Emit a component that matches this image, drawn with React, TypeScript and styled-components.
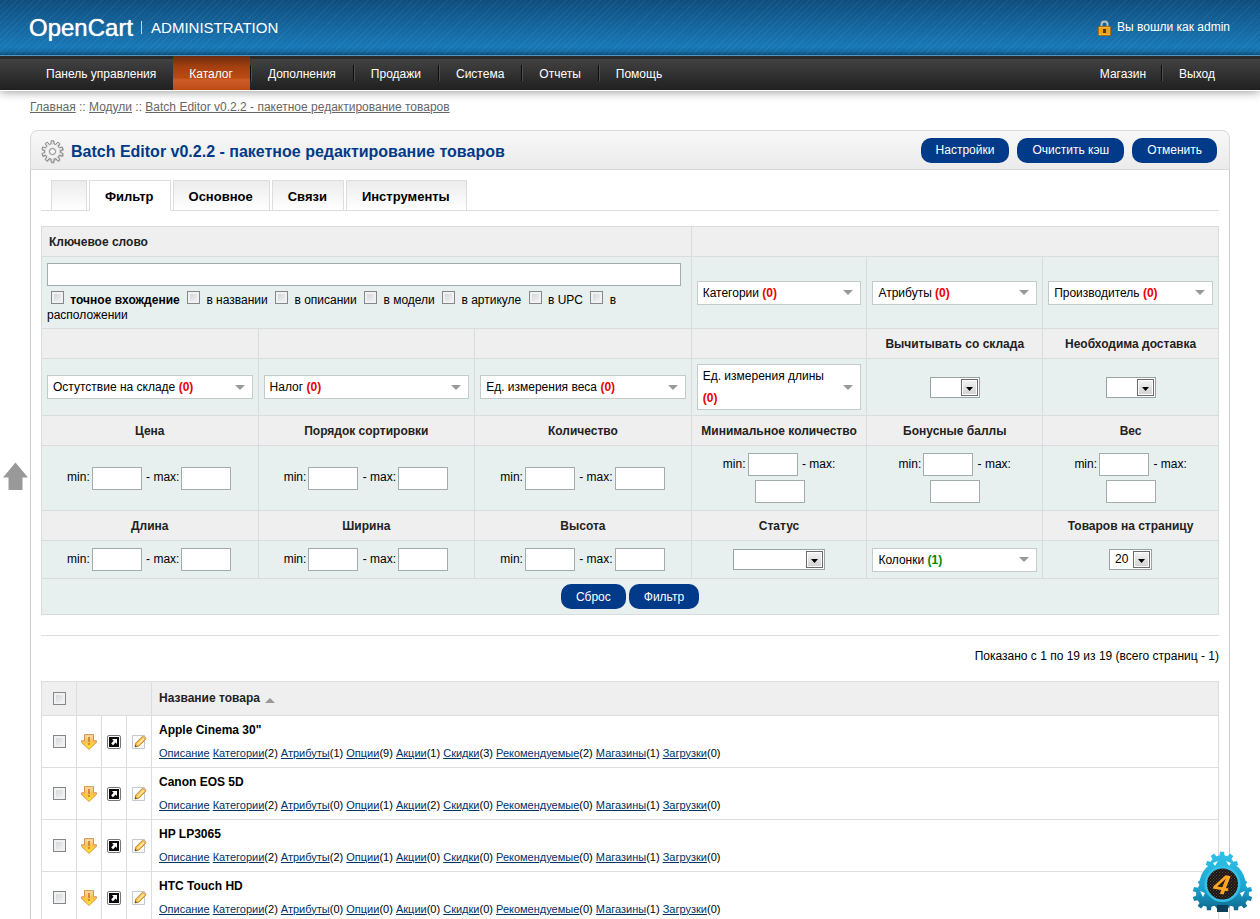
import React from 'react';
import styled, { createGlobalStyle } from 'styled-components';

const GlobalStyle = createGlobalStyle`
  *, *::before, *::after { box-sizing: border-box; }
  body {
    margin: 0;
    background: #fff;
    color: #000;
    font: 12px/15px "Liberation Sans", Arial, sans-serif;
  }
  button, input, select { font: inherit; color: inherit; }
`;

/* ---------- page header ---------- */

const Header = styled.header`
  display: flex;
  justify-content: space-between;
  align-items: center;
  height: 55px;
  padding: 0 30px 0 29px;
  color: #fff;
  background:
    repeating-linear-gradient(135deg, rgba(255, 255, 255, 0.05) 0 1px, transparent 1px 4px),
    linear-gradient(#0f4d7d, #1878b7 85%, #1670ab 94%, #0f5585);
`;

const Logo = styled.a`
  display: flex;
  align-items: center;
  color: #fff;
  text-decoration: none;
`;

const LogoName = styled.span`
  font-size: 24px;
  line-height: 28px;
  text-shadow: 0 0 1px #fff;
`;

const LogoSection = styled.span`
  margin-left: 8px;
  padding-left: 9px;
  border-left: 1px solid #b9d6ea;
  font-size: 15px;
  line-height: 13px;
`;

const Account = styled.div`
  display: flex;
  align-items: center;
  gap: 6px;
`;

const Nav = styled.nav`
  display: flex;
  justify-content: space-between;
  height: 35px;
  padding: 0 30px;
  border-top: 1px solid #4f97c7;
  background: linear-gradient(#2a2a2a 0 3px, #424242 3px, #202020);
  box-shadow: 0 1px 0 #fff, 0 2px 9px rgba(0, 0, 0, 0.4);
`;

const MenuLink = styled.a`
  padding: 2px 15px 0 16px;
  color: #fff;
  text-decoration: none;
`;

const Menu = styled.ul<{ $roomy?: boolean }>`
  display: flex;
  align-items: center;
  margin: 0;
  padding: 0;
  list-style: none;
  ${MenuLink} { padding-right: ${(p) => (p.$roomy ? 17 : 15)}px; }
`;

const MenuItem = styled.li<{ $active?: boolean; $divided?: boolean }>`
  display: flex;
  align-items: center;
  height: 100%;
  background: ${(p) => (p.$active ? 'linear-gradient(#6b2c10, #a23f10 30%, #bb4a14 65%, #cd5c25 70%, #bd4b18)' : 'none')};
  &::before {
    content: '';
    display: ${(p) => (p.$divided ? 'block' : 'none')};
    width: 2px;
    height: 16px;
    background: linear-gradient(90deg, #0c0c0c 50%, #505050 50%);
  }
`;

/* ---------- content box ---------- */

const Content = styled.main`
  padding: 10px 30px 0;
`;

const Breadcrumb = styled.nav`
  color: #666;
  a { color: #666; }
`;

const Box = styled.section`
  margin-top: 15px;
`;

const Heading = styled.div`
  display: flex;
  align-items: center;
  gap: 8px;
  height: 40px;
  padding: 0 12px 0 10px;
  border: 1px solid #d8d8d8;
  border-radius: 8px 8px 0 0;
  background: linear-gradient(#f8f8f8, #ebebeb);
`;

const Title = styled.h1`
  display: flex;
  flex: 1;
  align-items: center;
  gap: 6px;
  margin: 0;
  padding-top: 3px;
  color: #003a88;
  font-size: 16px;
  line-height: 20px;
`;

const PillButton = styled.button`
  height: 25px;
  padding: 1px 15px 0;
  border: 0;
  border-radius: 10px;
  background: #003a88;
  color: #fff;
  cursor: pointer;
`;

const BoxBody = styled.div`
  padding: 10px 10px 0;
  border: solid #ccc;
  border-width: 0 1px 1px;
`;

const Tabs = styled.div`
  display: flex;
  gap: 2px;
  padding-left: 10px;
  border-bottom: 1px solid #ddd;
`;

const Tab = styled.button<{ $active?: boolean }>`
  height: 31px;
  min-width: 36px;
  margin-bottom: -1px;
  padding: 2px 16px 0 15px;
  border: 1px solid #ddd;
  border-bottom-color: ${(p) => (p.$active ? '#fff' : '#ddd')};
  background: ${(p) => (p.$active ? '#fff' : 'linear-gradient(#ececec, #fff)')};
  font-size: 13px;
  font-weight: bold;
  cursor: pointer;
`;

/* ---------- filter form ---------- */

const FilterTable = styled.table`
  width: 100%;
  margin-top: 15px;
  border-collapse: collapse;
  table-layout: fixed;
  td, th { border: 1px solid #d8dcdc; }
`;

const HeadRow = styled.tr`
  height: 30px;
  background: #efefef;
`;

const FieldRow = styled.tr<{ $height: number }>`
  height: ${(p) => p.$height}px;
  background: #e7efef;
`;

const HeadCell = styled.th<{ $left?: boolean }>`
  padding: 2px 7px 0;
  color: #222;
  text-align: ${(p) => (p.$left ? 'left' : 'center')};
`;

const FieldCell = styled.td<{ $left?: boolean }>`
  padding: 0 5px;
  text-align: ${(p) => (p.$left ? 'left' : 'center')};
`;

const Keyword = styled.input`
  display: block;
  width: calc(100% - 5px);
  height: 23px;
  margin-bottom: 5px;
  border: 1px solid #a4adad;
  background: #fff;
`;

const Tick = styled.input.attrs({ type: 'checkbox' })`
  appearance: none;
  width: 13px;
  height: 13px;
  margin: 0;
  border: 1px solid #858888;
  background: linear-gradient(135deg, #cdd0d2, #f8f8f8);
  box-shadow: inset 0 0 0 2px #f1f1f1;
  vertical-align: middle;
`;

const Option = styled.label<{ $bold?: boolean }>`
  font-weight: ${(p) => (p.$bold ? 'bold' : 'normal')};
  ${Tick} { margin: 0 3px 0 4px; vertical-align: baseline; }
`;

const DropButton = styled.button`
  display: flex;
  justify-content: space-between;
  align-items: center;
  gap: 8px;
  width: 100%;
  padding: 0 7px 0 5px;
  border: 1px solid #c3cbcb;
  background: #fff;
  line-height: 22px;
  text-align: left;
  cursor: pointer;
`;

const Count = styled.b<{ $positive?: boolean }>`
  color: ${(p) => (p.$positive ? '#080' : '#e80000')};
`;

const NumberBox = styled.input`
  width: 50px;
  height: 23px;
  margin: 2px 1px 2px 2px;
  border: 1px solid #a4adad;
  background: #fff;
  vertical-align: middle;
`;

const SelectFrame = styled.span<{ $width: number }>`
  display: inline-grid;
  align-items: center;
  width: ${(p) => p.$width}px;
  vertical-align: middle;
  select, svg { grid-area: 1 / 1; }
  svg { justify-self: end; margin-right: 2px; pointer-events: none; }
`;

const NativeSelect = styled.select`
  appearance: none;
  width: 100%;
  height: 21px;
  padding: 0 5px;
  border: 1px solid #9aa3a3;
  border-radius: 0;
  background: #fff;
`;

const Actions = styled.div`
  display: flex;
  justify-content: center;
  gap: 3px;
`;

/* ---------- product list ---------- */

const Summary = styled.p`
  margin: 20px 0 17px;
  padding-top: 13px;
  border-top: 1px solid #ddd;
  text-align: right;
`;

const List = styled.table`
  width: 100%;
  border-collapse: collapse;
  table-layout: fixed;
  td, th { padding: 0; border: 1px solid #ddd; text-align: center; }
`;

const ListHead = styled.tr`
  height: 34px;
  background: #efefef;
`;

const ListRow = styled.tr`
  height: 52px;
`;

const NameHead = styled.th`
  && { padding: 0 7px; color: #222; text-align: left; }
  svg { margin-left: 2px; vertical-align: -1px; }
`;

const NameCell = styled.td`
  && { padding: 0 7px; text-align: left; }
`;

const ProductName = styled.div`
  margin-bottom: 8px;
  font-weight: bold;
`;

const ProductLinks = styled.div`
  font-size: 11px;
  a { color: #003366; }
`;

const IconLink = styled.a`
  display: grid;
  justify-content: center;
`;

/* ---------- floating controls ---------- */

const ToTop = styled.a`
  position: fixed;
  top: 50%;
  left: 3px;
  height: 30px;
`;

const Badge = styled.a`
  position: fixed;
  right: 6px;
  bottom: 6px;
  height: 62px;
`;

/* ---------- drawings ---------- */

function gearPath(cx: number, cy: number, outer: number, inner: number, teeth: number) {
  const step = (Math.PI * 2) / teeth;
  const at = (r: number, a: number) => `${(cx + r * Math.cos(a)).toFixed(2)} ${(cy + r * Math.sin(a)).toFixed(2)}`;
  const points: string[] = [];
  for (let i = 0; i < teeth; i++) {
    const a = i * step - Math.PI / 2;
    points.push(at(inner, a - step * 0.3), at(outer, a - step * 0.2), at(outer, a + step * 0.2), at(inner, a + step * 0.3));
  }
  return `M${points.join('L')}Z`;
}

const LockIcon = () => (
  <svg width="13" height="16" viewBox="0 0 13 16" aria-hidden="true">
    <path d="M3.500 8V4.500a3 3 0 0 1 6 0V8" fill="none" stroke="#b9bdbf" strokeWidth="2" />
    <rect x="0.5" y="6.500" width="12" height="9" rx="1" fill="#f6b930" stroke="#a9690c" />
    <path d="M1.500 9h10M1.500 11h10M1.500 13h10" stroke="#d98f14" />
    <rect x="5" y="9" width="3" height="4" fill="#5b3a08" />
  </svg>
);

const SettingsIcon = () => (
  <svg width="24" height="24" viewBox="0 0 24 24" aria-hidden="true">
    <path d={gearPath(12, 12.5, 11.2, 8.5, 10)} fill="#999" opacity="0.6" />
    <path d={gearPath(11.5, 11.5, 10.8, 7.8, 10)} fill="#e4e4e4" stroke="#888" strokeLinejoin="round" />
    <circle cx="11.5" cy="11.5" r="5.500" fill="none" stroke="#f4f4f4" strokeWidth="2" />
    <circle cx="11.5" cy="11.5" r="3" fill="#f6f6f6" stroke="#888" />
  </svg>
);

const Caret = () => (
  <svg width="10" height="5" viewBox="0 0 10 5" style={{ flexShrink: 0 }} aria-hidden="true">
    <path d="M0 0h10L5 5z" fill="#999" />
  </svg>
);

const SelectArrow = () => (
  <svg width="17" height="17" viewBox="0 0 17 17" aria-hidden="true">
    <defs>
      <linearGradient id="selectFace" x1="0" y1="0" x2="0" y2="1">
        <stop offset="0" stopColor="#f6f6f6" />
        <stop offset="1" stopColor="#cfcfcf" />
      </linearGradient>
    </defs>
    <rect x="0.5" y="0.5" width="16" height="16" fill="url(#selectFace)" stroke="#6b6b6b" />
    <rect x="1.5" y="1.5" width="14" height="14" fill="none" stroke="#fff" />
    <path d="M5 8h7l-3.500 4z" fill="#000" />
  </svg>
);

const ApplyIcon = () => (
  <svg width="16" height="16" viewBox="0 0 16 16" aria-hidden="true">
    <defs>
      <linearGradient id="applyFace" x1="0" y1="0" x2="0" y2="1">
        <stop offset="0" stopColor="#fbdcb8" />
        <stop offset="0.500" stopColor="#fbc04a" />
        <stop offset="1" stopColor="#ffee20" />
      </linearGradient>
    </defs>
    <path d="M3.500.600h9v6.200h2.900v1.600L8 15.400.600 8.400V6.800h2.900z" fill="url(#applyFace)" stroke="#d9914a" strokeLinejoin="round" />
    <path d="M8 3v5M8 9v2" stroke="#c07a2c" strokeWidth="1.500" />
  </svg>
);

const OpenIcon = () => (
  <svg width="14" height="14" viewBox="0 0 14 14" aria-hidden="true">
    <rect x="0.5" y="0.5" width="13" height="13" rx="1.5" fill="#fff" stroke="#777" />
    <rect x="2" y="2" width="10" height="10" fill="#0c0c0c" />
    <path d="M5 4h5v5L8.600 7.600 6 10.200 4.200 8.400 6.600 5.800z" fill="#fff" />
  </svg>
);

const EditIcon = () => (
  <svg width="16" height="16" viewBox="0 0 16 16" aria-hidden="true">
    <path d="M1.500 1.500h12v13h-12z" fill="#fdfdfd" stroke="#c3c9d0" />
    <path d="M4 13l.8-4L11.500 2.300l3.200 3-6.800 6.700z" fill="#f6c14a" stroke="#c4872a" strokeLinejoin="round" />
    <path d="M6.500 10.700l6.600-6.600" stroke="#ffe9a8" strokeWidth="1.500" />
    <path d="M11.500 2.300l1.200-1.100 3.100 2.900-1.100 1.200z" fill="#d9b08c" />
    <path d="M4 13l.5-2 1.500 1.500z" fill="#333" />
  </svg>
);

const BadgeIcon = () => (
  <svg width="62" height="62" viewBox="0 0 62 62" role="img" aria-label="4">
    <defs>
      <linearGradient id="badgeBlue" gradientUnits="userSpaceOnUse" x1="0" y1="0" x2="0" y2="62">
        <stop offset="0" stopColor="#2fc4ea" />
        <stop offset="0.600" stopColor="#1ba3cf" />
        <stop offset="1" stopColor="#0c5f82" />
      </linearGradient>
      <pattern id="badgeMesh" width="3" height="3" patternUnits="userSpaceOnUse">
        <rect width="3" height="3" fill="#1c1512" />
        <path d="M0 0h1v1H0zM1.500 1.500h1v1h-1z" fill="#584c44" />
      </pattern>
    </defs>
    <g fill="url(#badgeBlue)">
      <path d={gearPath(30, 17, 16.5, 13, 10)} />
      <path d={gearPath(17, 43, 16.5, 13, 10)} />
      <path d={gearPath(44, 43, 16.5, 13, 10)} />
      <circle cx="30.500" cy="33" r="23" />
    </g>
    <path d="M25 54h11v7H25z" fill="#0d4058" />
    <path d="M21 12l5-2-3 5zM39 12l-5-2 3 5zM8 40l5 2-2 4zM53 40l-5 2 2 4z" fill="#fff" />
    <circle cx="30.500" cy="33" r="18" fill="#35c1e6" />
    <circle cx="30.500" cy="33" r="15.500" fill="url(#badgeMesh)" />
    <text x="30" y="43" textAnchor="middle" fontSize="28" fontWeight="bold" fontStyle="italic" fill="#ffa524" transform="rotate(10 30 33)">4</text>
  </svg>
);

/* ---------- small components ---------- */

function DropDown({ label, count, positive }: { label: string; count: number; positive?: boolean }) {
  return (
    <DropButton type="button">
      <span>
        {label} <Count $positive={positive}>({count})</Count>
      </span>
      <Caret />
    </DropButton>
  );
}

function Range({ name, stacked }: { name: string; stacked?: boolean }) {
  return (
    <>
      <label>
        min:
        <NumberBox type="text" name={`${name}_min`} />
      </label>{' '}
      <label>
        - max:
        {stacked && <br />}
        <NumberBox type="text" name={`${name}_max`} />
      </label>
    </>
  );
}

function Select({ label, width, value = '' }: { label: string; width: number; value?: string }) {
  return (
    <SelectFrame $width={width}>
      <NativeSelect aria-label={label} defaultValue={value}>
        <option value={value}>{value}</option>
      </NativeSelect>
      <SelectArrow />
    </SelectFrame>
  );
}

/* ---------- data ---------- */

const MENU = ['Панель управления', 'Каталог', 'Дополнения', 'Продажи', 'Система', 'Отчеты', 'Помощь'];
const TABS = ['', 'Фильтр', 'Основное', 'Связи', 'Инструменты'];
const SCOPES = ['точное вхождение', 'в названии', 'в описании', 'в модели', 'в артикуле', 'в UPC', 'в расположении'];
const LINKS = ['Категории', 'Атрибуты', 'Опции', 'Акции', 'Скидки', 'Рекомендуемые', 'Магазины', 'Загрузки'];
const PRODUCTS = [
  { name: 'Apple Cinema 30"', counts: [2, 1, 9, 1, 3, 2, 1, 0] },
  { name: 'Canon EOS 5D', counts: [2, 0, 1, 2, 0, 0, 1, 0] },
  { name: 'HP LP3065', counts: [2, 2, 1, 0, 0, 0, 1, 0] },
  { name: 'HTC Touch HD', counts: [2, 0, 0, 0, 0, 0, 1, 0] },
];
const RANGES = ['Цена', 'Порядок сортировки', 'Количество', 'Минимальное количество', 'Бонусные баллы', 'Вес'];
const SIZES = ['Длина', 'Ширина', 'Высота'];

export default function App() {
  return (
    <>
      <GlobalStyle />
      <Header>
        <Logo href="#">
          <LogoName>OpenCart</LogoName>
          <LogoSection>ADMINISTRATION</LogoSection>
        </Logo>
        <Account>
          <LockIcon />
          <span>Вы вошли как admin</span>
        </Account>
      </Header>
      <Nav>
        <Menu $roomy>
          {MENU.map((item, i) => (
            <MenuItem key={item} $active={i === 1} $divided={i > 1}>
              <MenuLink href="#">{item}</MenuLink>
            </MenuItem>
          ))}
        </Menu>
        <Menu>
          <MenuItem>
            <MenuLink href="#">Магазин</MenuLink>
          </MenuItem>
          <MenuItem $divided>
            <MenuLink href="#">Выход</MenuLink>
          </MenuItem>
        </Menu>
      </Nav>

      <Content>
        <Breadcrumb>
          <a href="#">Главная</a> :: <a href="#">Модули</a> :: <a href="#">Batch Editor v0.2.2 - пакетное редактирование товаров</a>
        </Breadcrumb>

        <Box>
          <Heading>
            <Title>
              <SettingsIcon />
              Batch Editor v0.2.2 - пакетное редактирование товаров
            </Title>
            <PillButton type="button">Настройки</PillButton>
            <PillButton type="button">Очистить кэш</PillButton>
            <PillButton type="button">Отменить</PillButton>
          </Heading>

          <BoxBody>
            <Tabs role="tablist">
              {TABS.map((tab, i) => (
                <Tab key={tab} type="button" role="tab" aria-selected={i === 1} $active={i === 1}>
                  {tab}
                </Tab>
              ))}
            </Tabs>

            <FilterTable>
              <colgroup>
                <col width="18.4%" />
                <col width="18.4%" />
                <col width="18.4%" />
                <col width="14.93%" />
                <col width="14.93%" />
                <col width="14.94%" />
              </colgroup>
              <tbody>
                <HeadRow>
                  <HeadCell colSpan={3} $left>
                    <label htmlFor="keyword">Ключевое слово</label>
                  </HeadCell>
                  <HeadCell colSpan={3} />
                </HeadRow>
                <FieldRow $height={72}>
                  <FieldCell colSpan={3} $left>
                    <Keyword id="keyword" type="text" />
                    {SCOPES.map((scope, i) => (
                      <React.Fragment key={scope}>
                        <Option $bold={i === 0}>
                          <Tick />
                          {scope.split(' ').map((word) => (
                            <React.Fragment key={word}>
                              {' '}
                              <span>{word}</span>
                            </React.Fragment>
                          ))}
                        </Option>{' '}
                      </React.Fragment>
                    ))}
                  </FieldCell>
                  <FieldCell><DropDown label="Категории" count={0} /></FieldCell>
                  <FieldCell><DropDown label="Атрибуты" count={0} /></FieldCell>
                  <FieldCell><DropDown label="Производитель" count={0} /></FieldCell>
                </FieldRow>

                <HeadRow>
                  <HeadCell />
                  <HeadCell />
                  <HeadCell />
                  <HeadCell />
                  <HeadCell>Вычитывать со склада</HeadCell>
                  <HeadCell>Необходима доставка</HeadCell>
                </HeadRow>
                <FieldRow $height={57}>
                  <FieldCell><DropDown label="Остутствие на складе" count={0} /></FieldCell>
                  <FieldCell><DropDown label="Налог" count={0} /></FieldCell>
                  <FieldCell><DropDown label="Ед. измерения веса" count={0} /></FieldCell>
                  <FieldCell><DropDown label="Ед. измерения длины" count={0} /></FieldCell>
                  <FieldCell><Select label="Вычитывать со склада" width={50} /></FieldCell>
                  <FieldCell><Select label="Необходима доставка" width={50} /></FieldCell>
                </FieldRow>

                <HeadRow>
                  {RANGES.map((name) => (
                    <HeadCell key={name}>{name}</HeadCell>
                  ))}
                </HeadRow>
                <FieldRow $height={65}>
                  {RANGES.map((name, i) => (
                    <FieldCell key={name}>
                      <Range name={name} stacked={i > 2} />
                    </FieldCell>
                  ))}
                </FieldRow>

                <HeadRow>
                  {SIZES.map((name) => (
                    <HeadCell key={name}>{name}</HeadCell>
                  ))}
                  <HeadCell>Статус</HeadCell>
                  <HeadCell />
                  <HeadCell>Товаров на страницу</HeadCell>
                </HeadRow>
                <FieldRow $height={38}>
                  {SIZES.map((name) => (
                    <FieldCell key={name}>
                      <Range name={name} />
                    </FieldCell>
                  ))}
                  <FieldCell><Select label="Статус" width={92} /></FieldCell>
                  <FieldCell><DropDown label="Колонки" count={1} positive /></FieldCell>
                  <FieldCell><Select label="Товаров на страницу" width={43} value="20" /></FieldCell>
                </FieldRow>

                <FieldRow $height={36}>
                  <FieldCell colSpan={6}>
                    <Actions>
                      <PillButton type="reset">Сброс</PillButton>
                      <PillButton type="button">Фильтр</PillButton>
                    </Actions>
                  </FieldCell>
                </FieldRow>
              </tbody>
            </FilterTable>

            <Summary>Показано с 1 по 19 из 19 (всего страниц - 1)</Summary>

            <List>
              <colgroup>
                <col width="35" />
                <col width="25" />
                <col width="25" />
                <col width="25" />
                <col />
              </colgroup>
              <thead>
                <ListHead>
                  <th><Tick aria-label="Выбрать все" /></th>
                  <th colSpan={3} />
                  <NameHead>
                    Название товара{' '}
                    <svg width="10" height="5" viewBox="0 0 10 5" aria-hidden="true">
                      <path d="M0 5h10L5 0z" fill="#999" />
                    </svg>
                  </NameHead>
                </ListHead>
              </thead>
              <tbody>
                {PRODUCTS.map(({ name, counts }) => (
                  <ListRow key={name}>
                    <td><Tick aria-label={name} /></td>
                    <td><IconLink href="#" aria-label="Применить"><ApplyIcon /></IconLink></td>
                    <td><IconLink href="#" aria-label="Открыть"><OpenIcon /></IconLink></td>
                    <td><IconLink href="#" aria-label="Изменить"><EditIcon /></IconLink></td>
                    <NameCell>
                      <ProductName>{name}</ProductName>
                      <ProductLinks>
                        <a href="#">Описание</a>
                        {LINKS.map((link, i) => (
                          <React.Fragment key={link}>
                            {' '}
                            <a href="#">{link}</a>({counts[i]})
                          </React.Fragment>
                        ))}
                      </ProductLinks>
                    </NameCell>
                  </ListRow>
                ))}
              </tbody>
            </List>
          </BoxBody>
        </Box>
      </Content>

      <ToTop href="#" aria-label="Наверх">
        <svg width="25" height="30" viewBox="0 0 25 30" aria-hidden="true">
          <path d="M12.500 2.500L25 17.500h-5.500V30h-14V17.500H0z" fill="#999" />
        </svg>
      </ToTop>
      <Badge href="#"><BadgeIcon /></Badge>
    </>
  );
}
